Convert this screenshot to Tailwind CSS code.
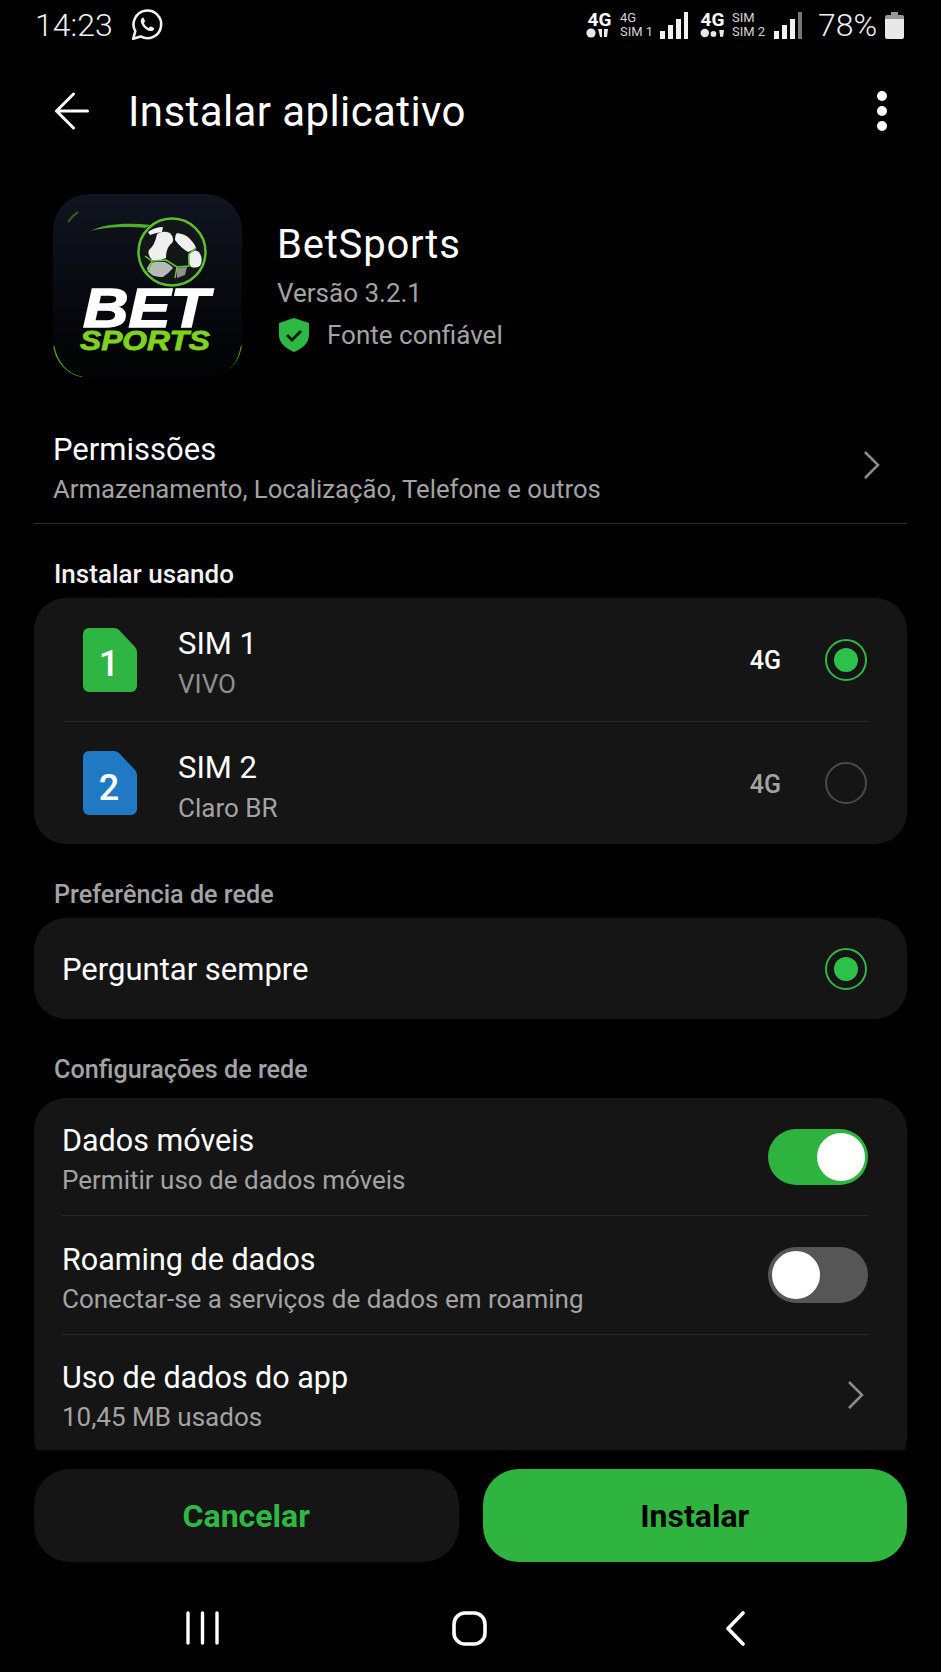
<!DOCTYPE html>
<html lang="pt-BR">
<head>
  <meta charset="UTF-8" />
  <meta name="viewport" content="width=device-width, initial-scale=1.0"/>
  <title>Instalar aplicativo</title>
  <script src="https://cdn.jsdelivr.net/npm/@tailwindcss/browser@4"></script>
</head>
<body class="bg-black text-white font-['Roboto',sans-serif]">
  <div class="w-[941px] h-[1672px] overflow-hidden flex flex-col">

    <!-- Status bar -->
    <div class="h-[50px] flex items-center pl-[35px] pr-[37px]">
      <span class="text-[32px] leading-none text-[#f2f2f2] font-light">14:23</span>
      <svg class="ml-[17px]" width="34" height="34" viewBox="0 0 32 32" fill="none">
        <path d="M3 29l2-7.2A13 13 0 1 1 10 26.8z" stroke="#f2f2f2" stroke-width="2.4" stroke-linejoin="round"/>
        <path d="M11.5 9.5c-1.6 1.2-1.8 3.2-.6 5.6 1.5 2.9 3.7 5 6.6 6.2 2.3.9 4.2.4 5.1-1.3.3-.6.2-1-.3-1.3l-2.500-1.3c-.5-.2-.8-.1-1.100.3l-.9 1.100c-2.200-.9-3.800-2.500-4.800-4.700l.9-1c.3-.3.3-.7.1-1.100l-1-2.400c-.3-.6-.9-.8-1.500-.1z" fill="#f2f2f2"/>
      </svg>
      <div class="ml-auto flex items-center">
        <div class="w-[27px] flex flex-col items-center">
          <span class="text-[19px] leading-[16px] font-bold">4G</span>
          <svg width="27" height="10" viewBox="0 0 27 10" fill="#e8e8e8"><circle cx="5" cy="5" r="4.6"/><path d="M12 1h4v8h-2zM18 1h4l-1 8h-3z"/></svg>
        </div>
        <div class="w-[30px] ml-[7px] flex flex-col text-[13px] leading-[14px] text-[#d4d4d4]">
          <span>4G</span><span class="whitespace-nowrap">SIM 1</span>
        </div>
        <svg class="ml-[10px]" width="28" height="27" viewBox="0 0 28 27" fill="#f2f2f2"><rect x="0" y="19" width="5" height="8"/><rect x="8" y="13" width="5" height="14"/><rect x="16" y="7" width="5" height="20"/><rect x="24" y="0" width="4" height="27"/></svg>
        <div class="w-[25px] ml-[12px] flex flex-col items-center">
          <span class="text-[19px] leading-[16px] font-bold">4G</span>
          <svg width="25" height="10" viewBox="0 0 26 10" fill="#e8e8e8"><circle cx="5" cy="5" r="4.400"/><circle cx="14" cy="6" r="3"/><path d="M20 2h5l-1 7h-3z"/></svg>
        </div>
        <div class="w-[32px] ml-[7px] flex flex-col text-[13px] leading-[14px] text-[#d4d4d4]">
          <span>SIM</span><span class="whitespace-nowrap">SIM 2</span>
        </div>
        <svg class="ml-[10px]" width="28" height="27" viewBox="0 0 28 27"><rect x="0" y="19" width="5" height="8" fill="#f2f2f2"/><rect x="8" y="13" width="5" height="14" fill="#f2f2f2"/><rect x="16" y="7" width="5" height="20" fill="#f2f2f2"/><rect x="24" y="0" width="4" height="27" fill="#777"/></svg>
        <span class="ml-[16px] w-[57px] text-[32px] leading-none text-[#f2f2f2] font-light whitespace-nowrap">78%</span>
        <svg class="ml-[10px]" width="19" height="27" viewBox="0 0 19 27"><path d="M6 0h7v3H6z" fill="#999"/><path d="M2 3h15a2 2 0 0 1 2 2v2H0V5a2 2 0 0 1 2-2z" fill="#999"/><path d="M0 7h19v18a2 2 0 0 1-2 2H2a2 2 0 0 1-2-2z" fill="#e8e8e8"/></svg>
      </div>
    </div>

    <!-- Title bar -->
    <div class="h-[122px] flex items-center pl-[54px] pr-[54px]">
      <svg width="35" height="38" viewBox="0 0 34 38" fill="none" stroke="#fff" stroke-width="3" stroke-linecap="round" stroke-linejoin="round"><path d="M19 2L2 19l17 17M2 19h31"/></svg>
      <h1 class="ml-[39px] mt-[1px] text-[42px] leading-none font-normal tracking-[0.400px]">Instalar aplicativo</h1>
      <div class="ml-auto flex flex-col gap-[5px]">
        <span class="block w-[10px] h-[10px] rounded-full bg-white"></span>
        <span class="block w-[10px] h-[10px] rounded-full bg-white"></span>
        <span class="block w-[10px] h-[10px] rounded-full bg-white"></span>
      </div>
    </div>

    <!-- App info -->
    <div class="mt-[22px] h-[184px] pl-[53px] flex">
      <div class="w-[189px] h-[184px] rounded-[36px] overflow-hidden bg-gradient-to-b from-[#111520] to-[#020304]">
        <svg width="189" height="184" viewBox="0 0 189 184">
          <path d="M15 28q4-6 10-10" stroke="#2f6b1c" stroke-width="2" fill="none"/>
          <path d="M37 37C50 30 75 28 98 31L92 34C75 32 52 33 37 37z" fill="#4fae28"/>
          <circle cx="119" cy="58" r="33.500" fill="#14171a" stroke="#5cc02e" stroke-width="2.500"/>
          <g fill="#efefef">
            <path d="M95 38Q102 33 110 33L109 38Q102 39 97 41z"/>
            <path d="M104 40Q110 36 117 39Q122 44 119 49Q113 53 113 64Q104 68 99 66Q94 60 96 56Q102 51 104 40z"/>
            <path d="M124 39Q132 40 136 44Q142 50 143 54Q138 57 135 58Q128 54 122 46Q122 41 124 39z"/>
            <path d="M136 60Q142 54 146 58Q150 64 148 70Q146 75 138 73Q134 68 136 60z"/>
            <path d="M97 69Q105 67 112 68Q118 71 120 74Q115 80 110 83Q103 83 99 81Q94 77 94 74z" fill="#b9b9b9"/>
            <path d="M124 74l10-1-2 8-8 3z" fill="#8f8f8f"/>
          </g>
          <path d="M92 62l7 5 14-1 11 7 12-1v-12l7-6M124 73l-2 11M99 67l-4 11" stroke="#62c832" stroke-width="1.500" fill="none"/>
          <text x="93" y="133" text-anchor="middle" textLength="126" lengthAdjust="spacingAndGlyphs" font-family="Liberation Sans" font-size="55" font-weight="700" font-style="italic" fill="#fff" stroke="#fff" stroke-width="1.500">BET</text>
          <text x="92" y="156" text-anchor="middle" textLength="130" lengthAdjust="spacingAndGlyphs" font-family="Liberation Sans" font-size="27" font-weight="700" font-style="italic" fill="#7ed321" stroke="#7ed321" stroke-width="0.800">SPORTS</text>
          <path d="M0 152q6 27 29 32M189 152q-4 24-22 31" stroke="#4aa826" stroke-width="2.500" fill="none"/>
        </svg>
      </div>
      <div class="ml-[35px] flex flex-col">
        <span class="mt-[29px] h-[44px] text-[40px] leading-[44px] tracking-[0.800px]">BetSports</span>
        <span class="mt-[8px] h-[36px] text-[26px] leading-[36px] text-[#a3a3a3]">Versão 3.2.1</span>
        <div class="mt-[4px] h-[40px] flex items-center">
          <svg class="ml-[2px]" width="30" height="34" viewBox="0 0 30 34"><path d="M15 0l15 5v12c0 8-6 13-15 17C6 30 0 25 0 17V5z" fill="#2db843"/><path d="M8 17l5 5 9-9" stroke="#0b1a0e" stroke-width="3" fill="none"/></svg>
          <span class="ml-[18px] text-[26px] leading-none text-[#a3a3a3]">Fonte confiável</span>
        </div>
      </div>
    </div>

    <!-- Permissions -->
    <div class="mx-[34px] h-[146px] pt-[51px] pl-[19px] pr-[27px] border-b border-[#2b2b2b] flex items-start justify-between">
      <div>
        <div class="h-[40px] text-[31px] leading-[40px] translate-y-[1px]">Permissões</div>
        <div class="h-[40px] text-[25.700px] leading-[40px] text-[#a3a3a3] whitespace-nowrap">Armazenamento, Localização, Telefone e outros</div>
      </div>
      <svg class="mt-[21px]" width="17" height="30" viewBox="0 0 17 30" fill="none" stroke="#8a8a8a" stroke-width="2.600"><path d="M2 2l13 13L2 28"/></svg>
    </div>

    <div class="h-[74px] pt-[30px] pl-[54px] text-[26px] leading-[40px] font-medium text-[#f2f2f2]">Instalar usando</div>

    <!-- SIM list -->
    <div class="mx-[34px] h-[246px] rounded-[32px] bg-[#151515] flex flex-col">
      <div class="h-[124px] ml-[29px] mr-[39px] flex items-center border-b border-[#2b2b2b]">
        <svg class="ml-[20px]" width="54" height="64" viewBox="0 0 54 64"><path d="M6 0H31q3 0 5 2L52 19q2 2 2 5V58a6 6 0 0 1-6 6H6a6 6 0 0 1-6-6V6a6 6 0 0 1 6-6z" fill="#2fb544"/><text x="26" y="48" text-anchor="middle" font-size="36" font-weight="500" fill="#fff">1</text></svg>
        <div class="ml-[41px] mt-[8px]">
          <div class="h-[40px] text-[31px] leading-[40px]">SIM 1</div>
          <div class="h-[40px] text-[26px] leading-[40px] text-[#8f8f8f]">VIVO</div>
        </div>
        <span class="ml-auto mt-[2px] text-[25px] font-medium leading-none">4G</span>
        <div class="ml-[44px] mr-[1px] w-[42px] h-[42px] rounded-full border-2 border-[#2db843] flex items-center justify-center">
          <span class="block w-[24px] h-[24px] rounded-full bg-[#2cc24a]"></span>
        </div>
      </div>
      <div class="h-[122px] ml-[29px] mr-[39px] flex items-center">
        <svg class="ml-[20px]" width="54" height="64" viewBox="0 0 54 64"><path d="M6 0H31q3 0 5 2L52 19q2 2 2 5V58a6 6 0 0 1-6 6H6a6 6 0 0 1-6-6V6a6 6 0 0 1 6-6z" fill="#2079c4"/><text x="26" y="49" text-anchor="middle" font-size="36" font-weight="500" fill="#fff">2</text></svg>
        <div class="ml-[41px] mt-[9px]">
          <div class="h-[40px] text-[31px] leading-[40px]">SIM 2</div>
          <div class="h-[40px] text-[26px] leading-[40px] text-[#a3a3a3]">Claro BR</div>
        </div>
        <span class="ml-auto mt-[3px] text-[25px] font-medium leading-none text-[#a3a3a3]">4G</span>
        <div class="ml-[44px] mr-[1px] w-[42px] h-[42px] rounded-full border-2 border-[#4a4a4a]"></div>
      </div>
    </div>

    <div class="h-[74px] pt-[31px] pl-[54px] text-[25.200px] leading-[40px] font-medium text-[#a3a3a3]">Preferência de rede</div>

    <!-- Network preference -->
    <div class="mx-[34px] h-[101px] rounded-[32px] bg-[#151515] pl-[28px] pr-[40px] flex items-center justify-between">
      <span class="mt-[2px] text-[31px] leading-none">Perguntar sempre</span>
      <div class="w-[42px] h-[42px] rounded-full border-2 border-[#2db843] flex items-center justify-center">
        <span class="block w-[24px] h-[24px] rounded-full bg-[#2cc24a]"></span>
      </div>
    </div>

    <div class="h-[79px] pt-[31px] pl-[54px] text-[25.200px] leading-[40px] font-medium text-[#a3a3a3]">Configurações de rede</div>

    <!-- Network settings, cut off by the bottom buttons -->
    <div class="mx-[34px] h-[352px] overflow-hidden">
      <div class="h-[372px] rounded-[32px] bg-[#151515] flex flex-col">
        <div class="h-[118px] ml-[28px] mr-[39px] flex items-center justify-between border-b border-[#2b2b2b]">
          <div class="mt-[7px]">
            <div class="h-[40px] text-[30.500px] leading-[40px]">Dados móveis</div>
            <div class="h-[38px] text-[26px] leading-[38px] text-[#a3a3a3]">Permitir uso de dados móveis</div>
          </div>
          <div class="w-[100px] h-[56px] rounded-full bg-[#2fb33f] flex items-center justify-end pr-[3px]">
            <span class="block w-[48px] h-[48px] rounded-full bg-white"></span>
          </div>
        </div>
        <div class="h-[119px] ml-[28px] mr-[39px] flex items-center justify-between border-b border-[#2b2b2b]">
          <div class="mt-[7px]">
            <div class="h-[40px] text-[30.500px] leading-[40px]">Roaming de dados</div>
            <div class="h-[38px] text-[26px] leading-[38px] text-[#a3a3a3]">Conectar-se a serviços de dados em roaming</div>
          </div>
          <div class="w-[100px] h-[56px] rounded-full bg-[#565656] flex items-center pl-[4px]">
            <span class="block w-[48px] h-[48px] rounded-full bg-white"></span>
          </div>
        </div>
        <div class="h-[115px] ml-[28px] mr-[39px] pr-[4px] flex items-center justify-between">
          <div class="mt-[8px]">
            <div class="h-[40px] text-[30.500px] leading-[40px]">Uso de dados do app</div>
            <div class="h-[38px] text-[26px] leading-[38px] text-[#a3a3a3]">10,45 MB usados</div>
          </div>
          <svg class="mt-[4px]" width="17" height="30" viewBox="0 0 17 30" fill="none" stroke="#8a8a8a" stroke-width="2.600"><path d="M2 2l13 13L2 28"/></svg>
        </div>
      </div>
    </div>

    <!-- Actions -->
    <div class="mt-[19px] mx-[34px] h-[93px] flex gap-[24px]">
      <button class="flex-1 rounded-[36px] bg-[#151515] text-[#2fb843] text-[32px] font-bold">Cancelar</button>
      <button class="flex-1 rounded-[36px] bg-[#2fb53f] text-black text-[32px] font-bold">Instalar</button>
    </div>

    <!-- Navigation bar -->
    <div class="flex-1 relative">
      <svg class="absolute left-[186px] top-[49px]" width="33" height="34" viewBox="0 0 33 34" stroke="#fff" stroke-width="3.400" stroke-linecap="round"><path d="M2 2v30M16.500 2v30M31 2v30"/></svg>
      <svg class="absolute left-[452px] top-[49px]" width="35" height="35" viewBox="0 0 35 35" fill="none" stroke="#fff" stroke-width="3.600"><rect x="2" y="2" width="31" height="31" rx="11"/></svg>
      <svg class="absolute left-[725px] top-[49px]" width="21" height="35" viewBox="0 0 21 35" fill="none" stroke="#fff" stroke-width="3.600" stroke-linecap="round" stroke-linejoin="round"><path d="M18 2L3 17.500 18 33"/></svg>
    </div>
  </div>
</body>
</html>
